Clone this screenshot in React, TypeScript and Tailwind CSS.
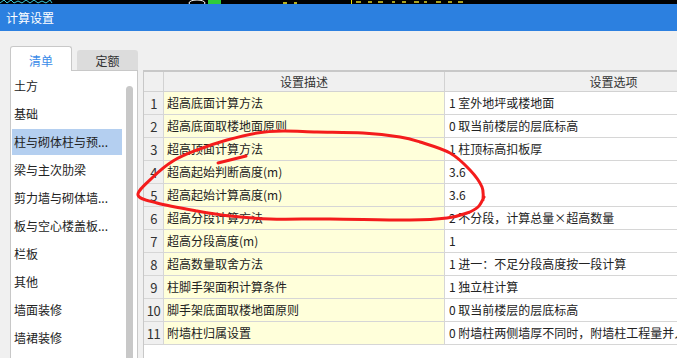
import React from 'react';

const listItems = [
    '土方',
    '基础',
    '柱与砌体柱与预...',
    '梁与主次肋梁',
    '剪力墙与砌体墙...',
    '板与空心楼盖板...',
    '栏板',
    '其他',
    '墙面装修',
    '墙裙装修',
];

const rows = [
    ['超高底面计算方法', '1 室外地坪或楼地面'],
    ['超高底面取楼地面原则', '0 取当前楼层的层底标高'],
    ['超高顶面计算方法', '1 柱顶标高扣板厚'],
    ['超高起始判断高度(m)', '3.6'],
    ['超高起始计算高度(m)', '3.6'],
    ['超高分段计算方法', '2 不分段，计算总量×超高数量'],
    ['超高分段高度(m)', '1'],
    ['超高数量取舍方法', '1 进一：不足分段高度按一段计算'],
    ['柱脚手架面积计算条件', '1 独立柱计算'],
    ['脚手架底面取楼地面原则', '0 取当前楼层的层底标高'],
    ['附墙柱归属设置', '0 附墙柱两侧墙厚不同时，附墙柱工程量并入墙体计算'],
];

// hand drawn red loop over rows 4-5
const loop: number[][] = [
    [483, 200], [482, 187], [470, 170], [450, 153], [420, 142], [400, 137], [363, 133],
    [317, 132], [283, 131], [257, 133], [227, 140], [197, 150], [173, 161], [152, 178],
    [138, 195], [157, 203], [197, 211], [230, 216], [270, 219], [330, 219], [410, 220],
    [447, 218], [467, 213], [478, 207], [484, 197],
];

const smooth = (pts: number[][]) => {
    let d = `M${pts[0][0]} ${pts[0][1]}`;
    for (let i = 0; i < pts.length - 1; i++) {
        const p0 = pts[i - 1] ?? pts[i];
        const p1 = pts[i];
        const p2 = pts[i + 1];
        const p3 = pts[i + 2] ?? p2;
        const c1x = p1[0] + (p2[0] - p0[0]) / 6;
        const c1y = p1[1] + (p2[1] - p0[1]) / 6;
        const c2x = p2[0] - (p3[0] - p1[0]) / 6;
        const c2y = p2[1] - (p3[1] - p1[1]) / 6;
        d += ` C${c1x} ${c1y} ${c2x} ${c2y} ${p2[0]} ${p2[1]}`;
    }
    return d;
};

const App: React.FC = () => {
    return (
        <div className="relative w-[677px] h-[358px] overflow-hidden bg-[#f0f0f0] font-['Noto_Sans_CJK_SC',sans-serif] text-[12px] text-[#222]">
            {/* strip of the window behind */}
            <div className="h-[4px] bg-black">
                <svg width="677" height="4" viewBox="0 0 677 4" className="block">
                    <path
                        d="M0 3 L4 0 L7 3 L11 0 L14 3 L18 1 L22 3 L26 0 L30 3 L34 0 L38 3 L42 1 L46 3 L50 0 L52 3"
                        stroke="#3cc8d8"
                        strokeWidth="1"
                        fill="none"
                    />
                    <ellipse cx="197" cy="3" rx="8" ry="3" stroke="#ffffff" strokeWidth="1" fill="none" />
                    <rect x="208" y="0" width="13" height="4" fill="#2fcc3a" />
                    <rect x="283" y="2" width="4" height="2" fill="#b8b020" />
                    <rect x="294" y="2" width="3" height="2" fill="#b8b020" />
                    <rect x="351" y="0" width="1" height="4" fill="#f0e000" />
                    <path
                        d="M356 2 h5 M368 2 h4 M378 2 h5 M392 2 h3 M402 2 h4 M414 2 h5 M424 2 h3 M436 2 h5 M448 2 h4 M458 2 h5"
                        stroke="#a8a020"
                        strokeWidth="2"
                    />
                </svg>
            </div>

            {/* title bar */}
            <div className="h-[27px] bg-[#2c80e0] flex items-center pl-[6px] text-white text-[12px] leading-none">
                计算设置
            </div>

            {/* body */}
            <div className="flex pl-[10px] pt-[15px] h-[327px]">
                {/* left column */}
                <div className="w-[128px] flex flex-col shrink-0">
                    <div className="flex items-end h-[24px] gap-[5px]">
                        <div className="w-[62px] h-[25px] -mb-px relative z-10 bg-white border border-[#c8c8c8] border-b-0 rounded-t-[3px] flex items-center justify-center pt-[3px] text-[#3b8ce8] leading-none">
                            清单
                        </div>
                        <div className="w-[61px] h-[20px] bg-[#dcdcdc] rounded-t-[3px] flex items-center justify-center pt-[2px] text-[#333] leading-none">
                            定额
                        </div>
                    </div>
                    <div className="flex-1 flex bg-white border border-[#c8c8c8] border-b-0">
                        <div className="flex-1 flex flex-col gap-[2px] pt-[2px] pl-[1px] pr-[2px]">
                            {listItems.map((item, i) => (
                                <div
                                    key={item}
                                    className={`h-[26px] shrink-0 flex items-center pl-[2px] leading-none whitespace-nowrap ${
                                        i === 2 ? 'bg-[#b4cff0]' : ''
                                    }`}
                                >
                                    {item}
                                </div>
                            ))}
                        </div>
                        <div className="w-[13px] pt-[15px] pl-[2px]">
                            <div className="w-[7px] h-full bg-[#c8c8c8] rounded-t-full" />
                        </div>
                    </div>
                </div>

                {/* table */}
                <div className="ml-[5px] mt-[24px] flex-1 overflow-hidden bg-white border-l border-t-2 border-[#c8c8c8]">
                    <div className="w-[640px]">
                        <div className="grid grid-cols-[20px_281px_338px] h-[20px] bg-[#f0f0f0] text-[#333]">
                            <div className="border-r border-b border-[#d2d2d2]" />
                            <div className="border-r border-b border-[#d2d2d2] flex items-center justify-center leading-none">
                                设置描述
                            </div>
                            <div className="border-r border-b border-[#d2d2d2] flex items-center justify-center leading-none">
                                设置选项
                            </div>
                        </div>
                        {rows.map(([desc, opt], i) => (
                            <div key={i} className="grid grid-cols-[20px_281px_338px] h-[23px]">
                                <div className="bg-[#f0f0f0] border-r border-b border-[#d6d6d6] flex items-center justify-center text-[13px] text-[#333] leading-none tracking-[-0.5px]">
                                    {i + 1}
                                </div>
                                <div className="bg-[#ffffda] border-r border-b border-[#d6d6d6] flex items-center pl-[3px] leading-none whitespace-nowrap">
                                    {desc}
                                </div>
                                <div className="border-r border-b border-[#d6d6d6] flex items-center pl-[4px] leading-none whitespace-nowrap overflow-hidden">
                                    {opt}
                                </div>
                            </div>
                        ))}
                    </div>
                </div>
            </div>

            {/* red annotation */}
            <svg
                className="absolute inset-0 pointer-events-none"
                width="677"
                height="358"
                viewBox="0 0 677 358"
            >
                <path
                    d={smooth(loop)}
                    stroke="#f41c1c"
                    strokeWidth="3"
                    fill="none"
                    strokeLinecap="round"
                    strokeLinejoin="round"
                />
                <path d="M218 163 L246 156" stroke="#f41c1c" strokeWidth="3" strokeLinecap="round" fill="none" />
            </svg>
        </div>
    );
};

export default App;
